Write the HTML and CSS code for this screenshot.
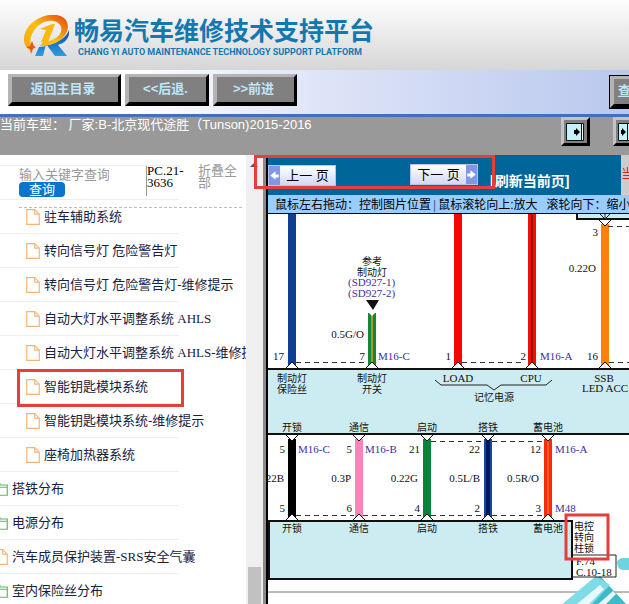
FILE: index.html
```html
<!DOCTYPE html>
<html lang="zh-CN">
<head>
<meta charset="utf-8">
<title>畅易汽车维修技术支持平台</title>
<link rel="stylesheet" href="styles.css">
</head>
<body>
<svg class="defs" aria-hidden="true">
  <symbol id="file" viewBox="1 1 12 14"><path d="M1.5 1.5h7l4 4v9h-11zM8.500 1.500v4h4"/></symbol>
  <symbol id="folder" viewBox="1 1 12 14"><path d="M1.500 13.500v-11h4l1 2h6v9zM1.500 6.500h11"/></symbol>
</svg>
<header class="banner">
  <svg class="logo" viewBox="0 0 46 42" aria-hidden="true">
    <defs>
      <linearGradient id="flame" x1="0" y1="1" x2="1" y2="0"><stop offset="0" stop-color="#f6a800"/><stop offset=".5" stop-color="#f9c013"/><stop offset="1" stop-color="#e2430c"/></linearGradient>
      <linearGradient id="leg" x1="0" y1="0" x2="0" y2="1"><stop offset="0" stop-color="#0b4aa0"/><stop offset="1" stop-color="#2f9de0"/></linearGradient>
    </defs>
    <path fill="url(#leg)" d="M45 15c1 8-4 13-11 15l9 11H31l-9-12-3 12h-8l4-9c11-1 27-7 30-17z"/>
    <path fill="url(#flame)" d="M7 36C-2 31-2 20 5 11 13 1 31-4 40 3c8 7 3 20-9 25-5 2-10 3-15 3l3-4c13-1 20-8 18-15C34 3 19 4 12 13 6 20 5 27 8 32z"/>
    <path fill="#f9b90d" d="M16 14c6-3 11-5 15-5l-7 18h-7l5-12z"/>
    <path fill="#e65a1b" d="M8 26l2 5 2 1-3 2-2 5-1-5-4-2 4-1z"/>
  </svg>
  <div class="brand">
    <h1>畅易汽车维修技术支持平台</h1>
    <p>CHANG YI AUTO MAINTENANCE TECHNOLOGY SUPPORT PLATFORM</p>
  </div>
</header>
<nav class="toolbar">
  <button class="bevel home" type="button">返回主目录</button>
  <button class="bevel" type="button">&lt;&lt;后退.</button>
  <button class="bevel" type="button">&gt;&gt;前进</button>
  <button class="bevel lookup" type="button">查询</button>
</nav>
<div class="status">
  <p>当前车型： 厂家:B-北京现代途胜（Tunson)2015-2016</p>
  <div class="panes">
    <button class="pane" type="button" aria-label="展开右侧"><svg viewBox="0 0 18 18"><path fill="#c4f1fb" stroke="#111" d="M.5.5h17v17H.5z"/><path fill="#fff" d="M15 1h2v16h-2z"/><path stroke="#111" d="M15.500 1v16"/><path d="M8 7h2V5l4 4-4 4v-2H8z"/></svg></button>
    <button class="pane" type="button" aria-label="展开左侧"><svg viewBox="0 0 18 18"><path fill="#c4f1fb" stroke="#111" d="M.5.5h17v17H.5z"/><path stroke="#111" d="M9.500 1v16"/><path d="M3 7h1V5l4 4-4 4v-2H3z"/></svg></button>
  </div>
</div>
<main class="work">
  <aside class="sidebar">
    <form class="search">
      <div class="field">
        <input type="text" placeholder="输入关键字查询" aria-label="关键字">
        <button type="button">查询</button>
      </div>
      <span class="code">PC.21-3636</span>
      <a class="fold" href="#">折叠全部</a>
    </form>
    <ul class="tree">
      <li class="cut"></li>
      <li></li>
      <li class="sub"><svg class="file"><use href="#file"/></svg><a href="#">驻车辅助系统</a></li>
      <li class="sub"><svg class="file"><use href="#file"/></svg><a href="#">转向信号灯 危险警告灯</a></li>
      <li class="sub"><svg class="file"><use href="#file"/></svg><a href="#">转向信号灯 危险警告灯-维修提示</a></li>
      <li class="sub"><svg class="file"><use href="#file"/></svg><a href="#">自动大灯水平调整系统 AHLS</a></li>
      <li class="sub"><svg class="file"><use href="#file"/></svg><a href="#">自动大灯水平调整系统 AHLS-维修提示</a></li>
      <li class="sub marked"><svg class="file"><use href="#file"/></svg><a href="#">智能钥匙模块系统</a></li>
      <li class="sub"><svg class="file"><use href="#file"/></svg><a href="#">智能钥匙模块系统-维修提示</a></li>
      <li class="sub"><svg class="file"><use href="#file"/></svg><a href="#">座椅加热器系统</a></li>
      <li><svg class="folder"><use href="#folder"/></svg><a href="#">搭铁分布</a></li>
      <li><svg class="folder"><use href="#folder"/></svg><a href="#">电源分布</a></li>
      <li><svg class="file"><use href="#file"/></svg><a href="#">汽车成员保护装置-SRS安全气囊</a></li>
      <li><svg class="folder"><use href="#folder"/></svg><a href="#">室内保险丝分布</a></li>
    </ul>
  </aside>
  <div class="scroll"><span class="up"></span><span class="thumb"></span></div>
  <section class="viewer">
    <div class="pager">
      <div class="links">
        <button class="page prev" type="button"><svg viewBox="0 0 10 18"><path fill="#fff" d="M1 9l5-4v3h3v3H6v2z"/></svg><span>上一 页</span></button>
        <button class="page next" type="button"><span>下一 页</span><svg viewBox="0 0 10 18"><path fill="#fff" d="M9 9L4 5v3H1v3h3v2z"/></svg></button>
        <a class="refresh" href="#">[刷新当前页]</a>
      </div>
      <span class="current">当前</span>
    </div>
    <p class="hint"><span>鼠标左右拖动：控制图片位置</span><i>|</i><span>鼠标滚轮向上:放大</span><span class="down">滚轮向下：缩小</span></p>
    <div class="canvas">
      <svg class="diagram" viewBox="268 214 361 390">
        <g class="body">
          <path d="M260 369h380v65H260z"/>
          <path d="M269 521h303v58H269z"/>
          <path d="M577 205h63v14h-63z"/>
        </g>
        <g class="wires">
          <path stroke="#0f3f92" d="M292 210v155"/>
          <path stroke="#15873a" d="M372 313v52"/><path class="core" stroke="#a79b2c" d="M372 313v52"/>
          <path stroke="#f40606" d="M458 210v155"/>
          <path stroke="#f01208" d="M532 210v155"/><path class="core" stroke="#9c1208" d="M532 210v155"/>
          <path stroke="#ff8208" d="M605 224v141"/>
          <path stroke="#000" d="M292 439v78"/>
          <path stroke="#f983bb" d="M359 439v78"/>
          <path stroke="#068437" d="M427 439v78"/>
          <path stroke="#154a9b" d="M488 439v78"/><path class="core wide" stroke="#07165f" d="M488 439v78"/>
          <path stroke="#f52a10" d="M548 439v78"/><path class="core" stroke="#ff5b16" d="M548 439v78"/>
        </g>
        <path class="dash" d="M296 362.500h70M462 362.500h62M609 362.500h20M608 226.500h21M296 515.500h58M363 515.500h58M431 515.500h52M492 515.500h50M431 441.500h51M492 441.500h50"/>
        <g class="plugs">
          <path d="M286 368l6-6 6 6M366 368l6-6 6 6M452 368l6-6 6 6M526 368l6-6 6 6M599 368l6-6 6 6"/>
          <path d="M286 435l6 6 6-6M353 435l6 6 6-6M421 435l6 6 6-6M482 435l6 6 6-6M542 435l6 6 6-6"/>
          <path d="M286 520l6-6 6 6M353 520l6-6 6 6M421 520l6-6 6 6M482 520l6-6 6 6M542 520l6-6 6 6"/>
          <path d="M599 220l6 6 6-6"/>
        </g>
        <path class="thin" d="M599 213l6 6 6-6M605 213v6M435 380l6 5h46l7 5 7-5h45l6-5"/>
        <path fill="#fff" d="M367 311l5 5 5-5v-2h-10z"/>
        <path d="M366 300h13l-6 10z"/>
        <g class="cn mid">
          <text x="372" y="265">参考</text><text x="372" y="276">制动灯</text>
          <text x="292" y="382">制动灯</text><text x="292" y="393">保险丝</text>
          <text x="372" y="382">制动灯</text><text x="372" y="393">开关</text>
          <text x="494" y="401">记忆电源</text>
          <text x="292" y="431">开锁</text><text x="359" y="431">通信</text><text x="427" y="431">启动</text><text x="488" y="431">搭铁</text><text x="548" y="431">蓄电池</text>
          <text x="292" y="532">开锁</text><text x="359" y="532">通信</text><text x="427" y="532">启动</text><text x="488" y="532">搭铁</text><text x="548" y="532">蓄电池</text>
          <text x="584" y="530">电控</text><text x="584" y="541">转向</text><text x="584" y="552">柱锁</text>
        </g>
        <g class="mid">
          <text x="458" y="382">LOAD</text><text x="531" y="382">CPU</text><text x="604" y="382">SSB</text><text x="605" y="392">LED ACC</text>
        </g>
        <g class="end">
          <text x="284" y="360">17</text><text x="365" y="360">7</text><text x="364" y="338">0.5G/O</text>
          <text x="451" y="360">1</text><text x="526" y="360">2</text><text x="598" y="360">16</text>
          <text x="598" y="236">3</text><text x="596" y="272">0.22O</text>
          <text x="285" y="453">5</text><text x="352" y="453">5</text><text x="420" y="453">21</text><text x="480" y="453">22</text><text x="541" y="453">12</text>
          <text x="284" y="482">0.22B</text><text x="351" y="482">0.3P</text><text x="418" y="482">0.22G</text><text x="480" y="482">0.5L/B</text><text x="539" y="482">0.5R/O</text>
          <text x="285" y="512">5</text><text x="352" y="512">6</text><text x="420" y="512">4</text><text x="480" y="512">2</text><text x="541" y="512">3</text>
        </g>
        <g class="ref">
          <text x="348" y="286">(SD927-1)</text><text x="348" y="297">(SD927-2)</text>
          <text x="378" y="360">M16-C</text><text x="540" y="360">M16-A</text>
          <text x="298" y="453">M16-C</text><text x="365" y="453">M16-B</text><text x="555" y="453">M16-A</text><text x="555" y="512">M48</text>
        </g>
        <path class="frame" d="M260 592h380"/>
        <g class="mark">
          <path fill="#3fb8c8" d="M558 612l42-36 26 28-8 10z"/>
          <path fill="#7fdbe5" d="M560 606l36-30 14 9-28 30z"/>
          <path fill="#e6fafc" d="M577 604l23-19 4 4-19 19zM596 606l17-15 3 3-14 14z"/>
          <path fill="#6dd3e0" d="M617 562q2-4 6-4h10v12h-10q-6-1-6-8z"/>
        </g>
        <path class="thin" d="M573 555h43v22h-43"/>
        <text x="576" y="565">F.74</text><text x="576" y="576">C.10-18</text>
        <path class="callout" d="M566 515h42v44h-42z"/>
      </svg>
    </div>
  </section>
  <div class="focus"></div>
</main>
</body>
</html>
```
FILE: styles.css
```css
* { box-sizing: border-box; }
body {
  margin: 0;
  height: 100vh;
  display: flex;
  flex-direction: column;
  overflow: hidden;
  font: 13px/16px "Liberation Sans", "Noto Sans CJK SC", sans-serif;
  background: #fff;
}
h1, p, ul { margin: 0; padding: 0; }
button { font: inherit; cursor: pointer; }
a { color: inherit; text-decoration: none; }
.defs { position: absolute; width: 0; height: 0; }

.banner {
  flex: none;
  display: flex;
  align-items: flex-start;
  gap: 4px;
  height: 70px;
  padding: 15px 24px 0;
  background: linear-gradient(#fefefe, #d6d6d6);
}
.logo { width: 46px; height: 42px; }
.brand { color: #1478b0; white-space: nowrap; }
.brand h1 { font: bold 25px/28px "Noto Sans CJK SC", sans-serif; }
.brand p { padding: 4px 0 0 4px; font: bold 9px/10px Roboto, "Liberation Sans", sans-serif; }

.toolbar {
  flex: none;
  display: flex;
  align-items: flex-start;
  gap: 4px;
  height: 47px;
  padding: 4px 0 0 8px;
  border-bottom: 3px solid #4a6cc0;
  background: linear-gradient(90deg, #fff 20%, #dfe5f8 50%, #bac8ee);
  overflow: hidden;
}
.bevel {
  width: 84px;
  height: 32px;
  padding: 0 4px 2px 0;
  border: solid;
  border-width: 3px 3px 4px 4px;
  border-color: #b4b4b4 #000 #000 #b4b4b4;
  background: #808080;
  color: #bfe6f8;
  font-weight: bold;
  white-space: nowrap;
}
.home { width: 113px; }
.lookup {
  margin: 2px -31px 0 auto;
  width: 50px;
  padding-left: 4px;
  outline: 1px solid #000;
  text-align: left;
  text-decoration: underline;
}

.status {
  flex: none;
  display: flex;
  justify-content: space-between;
  height: 38px;
  background: #999;
  color: #fff;
  white-space: nowrap;
  overflow: hidden;
}
.panes { display: flex; gap: 23px; margin-right: -13px; }
.pane {
  width: 29px;
  height: 29px;
  padding: 2px;
  border: 3px solid;
  border-color: #c4c4c4 #000 #000 #c4c4c4;
  background: #808080;
}
.pane svg { display: block; width: 18px; height: 18px; }

.work { position: relative; flex: 1; min-height: 0; display: flex; }
.sidebar { position: relative; flex: none; width: 246px; overflow: hidden; }
.search {
  position: absolute;
  top: 0;
  left: 19px;
  right: 4px;
  height: 53px;
  display: flex;
  padding-top: 10px;
  border-bottom: 1px dashed #bbb;
  background: #fff;
  line-height: 12px;
}
.field { width: 127px; }
.field input {
  display: block;
  width: 90px;
  height: 17px;
  padding: 0;
  border: 0;
  background: none;
  font: 13px/17px "Noto Sans CJK SC", sans-serif;
}
.field input::placeholder { color: #999; }
.field button {
  display: block;
  width: 46px;
  height: 15px;
  padding: 0;
  border: 0;
  border-radius: 4px;
  background: #0b74cc;
  color: #fff;
  line-height: 15px;
}
.code {
  width: 52px;
  height: 31px;
  border-left: 1px solid #999;
  font-family: "Liberation Serif", serif;
}
.fold { width: 40px; color: #999; }

.tree { width: 179px; list-style: none; font-family: "Liberation Serif", "Noto Sans CJK SC", serif; color: #15223f; }
.tree li {
  position: relative;
  display: flex;
  align-items: center;
  gap: 4px;
  height: 34px;
  padding-left: 12px;
  border-bottom: 1px solid #eee;
  white-space: nowrap;
}
.tree li.cut { height: 11px; }
.tree li.sub { padding-left: 44px; }
.tree svg { flex: none; width: 14px; height: 16px; margin-left: -18px; fill: none; }
.file { stroke: #f3b576; }
.folder { stroke: #5fb75f; }
.marked::after {
  content: "";
  position: absolute;
  inset: -1px -5px -4px 17px;
  border: 3px solid #e53e3c;
}

.scroll {
  flex: none;
  position: relative;
  width: 22px;
  border-right: 2px solid #000;
  background: linear-gradient(90deg, #f0f0f0 17px, #8a8a8a 17px);
}
.up { position: absolute; top: 8px; left: 4px; border: 4px solid transparent; border-top: 0; border-bottom-color: #555; }
.thumb { position: absolute; left: 2px; bottom: 0; width: 13px; height: 37px; background: #c1c1c1; }

.viewer { flex: 1; min-width: 0; display: flex; flex-direction: column; }
.pager { flex: none; display: flex; height: 40px; overflow: hidden; }
.links { flex: 1; display: flex; padding-top: 9px; background: #006699; }
.page {
  display: flex;
  align-items: center;
  width: 68px;
  height: 21px;
  padding: 0;
  border: 1px solid #b8c4ee;
  background: linear-gradient(#fff, #d3d8f6);
  line-height: 19px;
  white-space: nowrap;
}
.page span { flex: 1; }
.page svg { width: 11px; height: 19px; background: #8296e4; }
.prev { margin-top: 1px; }
.next { margin-left: 74px; }
.refresh { margin: 9px 0 0 12px; color: #fff; font-size: 14px; font-weight: bold; white-space: nowrap; }
.current { width: 8px; padding-top: 11px; background: #ccc; color: #e02020; white-space: nowrap; overflow: hidden; }
.hint {
  flex: none;
  display: flex;
  height: 19px;
  padding-left: 7px;
  border-bottom: 1px solid #000;
  background: #99ccff;
  font-size: 12px;
  line-height: 20px;
  white-space: nowrap;
  overflow: hidden;
}
.hint i { margin: 0 2px; font-style: normal; color: #557; }
.hint .down { margin-left: 9px; }

.canvas { flex: 1; min-height: 0; overflow: hidden; }
.diagram { display: block; width: 361px; height: 390px; font: 11px "Liberation Serif", serif; fill: #111; }
.cn { font: 10px "Noto Sans CJK SC", sans-serif; }
.mid { text-anchor: middle; }
.end { text-anchor: end; }
.ref { fill: #3a32a0; }
.body { fill: #cdecf1; stroke: #111; stroke-width: 2; }
.wires { stroke-width: 8; fill: none; }
.wires .core { stroke-width: 2; }
.wires .wide { stroke-width: 4; }
.dash { stroke: #333; stroke-dasharray: 5 4; fill: none; }
.plugs { fill: #fff; stroke: #111; }
.thin { fill: none; stroke: #222; }
.frame { stroke: #777; }
.callout { fill: none; stroke: #e53e3c; stroke-width: 3; }

.focus {
  position: absolute;
  top: 0;
  left: 254px;
  width: 241px;
  height: 34px;
  border: 3px solid #e53e3c;
  pointer-events: none;
}
```
